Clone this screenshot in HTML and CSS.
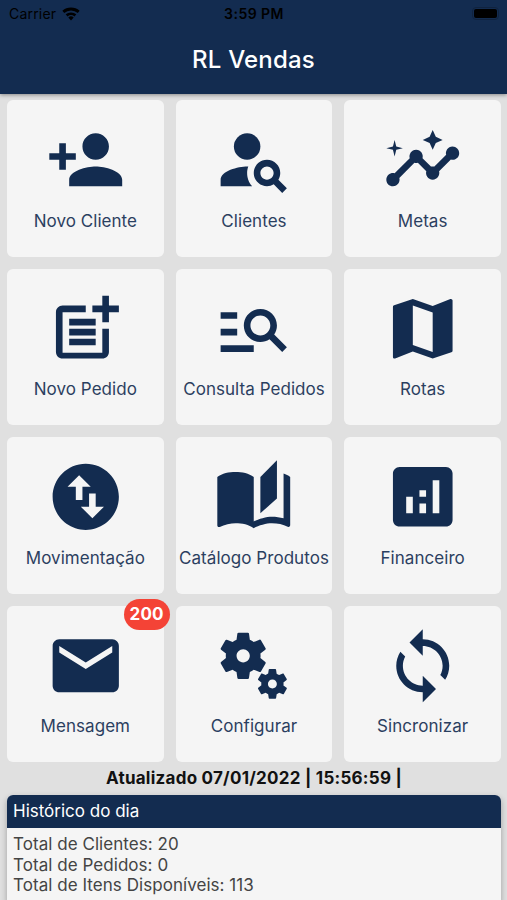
FILE: index.html
```html
<!DOCTYPE html>
<html lang="pt-BR">
<head>
    <meta charset="UTF-8">
    <meta name="viewport" content="width=device-width, initial-scale=1.0">
    <title>RL Vendas</title>
    <link rel="stylesheet" href="styles.css">
</head>
<body>

    <header class="app-bar">
        <div class="status-bar">
            <div class="carrier">
                <span>Carrier</span>
                <svg class="wifi" viewBox="0 0 18 14">
                    <path d="M9 13.6l2.7-3.2a4.2 4.2 0 0 0-5.4 0z" />
                    <path d="M4.6 8.4a6.8 6.8 0 0 1 8.8 0M1.3 4.9a11.6 11.6 0 0 1 15.4 0" fill="none" stroke="currentColor" stroke-width="2.8" />
                </svg>
            </div>
            <div class="clock">3:59 PM</div>
            <div class="battery"><div class="battery-level"></div></div>
        </div>
        <h1>RL Vendas</h1>
    </header>

    <main>
        <div class="menu">
            <a class="card" href="#">
                <svg class="icon" viewBox="0 0 24 24"><path d="M15 12c2.21 0 4-1.79 4-4s-1.79-4-4-4-4 1.79-4 4 1.79 4 4 4zm-9-2V7H4v3H1v2h3v3h2v-3h3v-2H6zm9 4c-2.67 0-8 1.34-8 4v2h16v-2c0-2.66-5.33-4-8-4z" /></svg>
                <span>Novo Cliente</span>
            </a>
            <a class="card" href="#">
                <svg class="icon" viewBox="0 0 24 24"><circle cx="10" cy="8" r="4" /><path d="M10.35 14.01C7.62 13.91 2 15.27 2 18v2h9.54c-2.47-2.76-1.23-5.89-1.19-5.99zM19.43 18.02C19.79 17.43 20 16.74 20 16c0-2.21-1.79-4-4-4s-4 1.79-4 4 1.79 4 4 4c.74 0 1.43-.22 2.02-.57L20.59 22 22 20.59l-2.57-2.57zM16 18c-1.1 0-2-.9-2-2s.9-2 2-2 2 .9 2 2-.9 2-2 2z" /></svg>
                <span>Clientes</span>
            </a>
            <a class="card" href="#">
                <svg class="icon" viewBox="0 0 24 24"><path d="M21 8c-1.45 0-2.26 1.44-1.93 2.51l-3.55 3.56c-.3-.09-.74-.09-1.04 0l-2.55-2.55C12.27 10.45 11.46 9 10 9c-1.45 0-2.27 1.44-1.93 2.52l-4.56 4.55C2.44 15.74 1 16.55 1 18c0 1.1.9 2 2 2 1.45 0 2.26-1.44 1.93-2.51l4.55-4.56c.3.09.74.09 1.04 0l2.55 2.55C12.73 16.55 13.54 18 15 18c1.45 0 2.27-1.44 1.93-2.52l3.56-3.55C21.56 12.26 23 11.45 23 10c0-1.1-.9-2-2-2z" /><path d="M15 9l.94-2.07L18 6l-2.06-.93L15 3l-.92 2.07L12 6l2.08.93zM3.5 11L4 9l2-.5L4 8l-.5-2L3 8l-2 .5L3 9z" /></svg>
                <span>Metas</span>
            </a>
            <a class="card" href="#">
                <svg class="icon" viewBox="0 0 24 24"><path d="M17 19.22H5V7h7V5H5c-1.1 0-2 .9-2 2v12c0 1.1.9 2 2 2h12c1.1 0 2-.9 2-2v-7h-2v7.22z" /><path d="M19 2h-2v3h-3v2h3v3h2V7h3V5h-3V2zM7 9h8v2H7zM7 12h8v2H7zM7 15h8v2H7z" /></svg>
                <span>Novo Pedido</span>
            </a>
            <a class="card" href="#">
                <svg class="icon" viewBox="0 0 24 24"><path d="M7 9H2V7h5v2zm0 3H2v2h5v-2zm13.59 7l-3.83-3.83c-.8.52-1.74.83-2.76.83-2.76 0-5-2.24-5-5s2.24-5 5-5 5 2.24 5 5c0 1.02-.31 1.96-.83 2.75L22 17.59 20.59 19zM17 11c0-1.65-1.35-3-3-3s-3 1.35-3 3 1.35 3 3 3 3-1.35 3-3zM2 19h10v-2H2v2z" /></svg>
                <span>Consulta Pedidos</span>
            </a>
            <a class="card" href="#">
                <svg class="icon" viewBox="0 0 24 24"><path d="M20.5 3l-.16.03L15 5.1 9 3 3.36 4.9c-.21.07-.36.25-.36.48V20.5c0 .28.22.5.5.5l.16-.03L9 18.9l6 2.1 5.64-1.9c.21-.07.36-.25.36-.48V3.5c0-.28-.22-.5-.5-.5zM15 19l-6-2.11V5l6 2.11V19z" /></svg>
                <span>Rotas</span>
            </a>
            <a class="card" href="#">
                <svg class="icon" viewBox="0 0 24 24"><path d="M12 2C6.48 2 2 6.48 2 12s4.48 10 10 10 10-4.48 10-10S17.52 2 12 2zM6.5 9L10 5.5 13.5 9H11v4H9V9H6.5zm11 6L14 18.5 10.5 15H13v-4h2v4h2.5z" /></svg>
                <span>Movimentação</span>
            </a>
            <a class="card" href="#">
                <svg class="icon" viewBox="0 0 24 24"><path d="M19 1l-5 5v11l5-4.5V1z" /><path d="M1 6v14.65c0 .25.25.5.5.5.1 0 .15-.05.25-.05C3.1 20.45 5.05 20 6.5 20c1.95 0 4.05.4 5.5 1.5V6c-1.45-1.1-3.55-1.5-5.5-1.5S2.45 4.9 1 6zm22 13.5V6c-.6-.45-1.25-.75-2-1v13.5c-1.1-.35-2.3-.5-3.5-.5-1.7 0-4.15.65-5.5 1.5v2c1.35-.85 3.8-1.5 5.5-1.5 1.65 0 3.35.3 4.75 1.05.1.05.15.05.25.05.25 0 .5-.25.5-.5v-1.1z" /></svg>
                <span>Catálogo Produtos</span>
            </a>
            <a class="card" href="#">
                <svg class="icon" viewBox="0 0 24 24"><path d="M19 3H5c-1.1 0-2 .9-2 2v14c0 1.1.9 2 2 2h14c1.1 0 2-.9 2-2V5c0-1.1-.9-2-2-2zM9 17H7v-5h2v5zm4 0h-2v-3h2v3zm0-5h-2v-2h2v2zm4 5h-2V7h2v10z" /></svg>
                <span>Financeiro</span>
            </a>
            <a class="card" href="#">
                <svg class="icon" viewBox="0 0 24 24"><path d="M20 4H4c-1.1 0-1.99.9-1.99 2L2 18c0 1.1.9 2 2 2h16c1.1 0 2-.9 2-2V6c0-1.1-.9-2-2-2zm0 4l-8 5-8-5V6l8 5 8-5v2z" /></svg>
                <span>Mensagem</span>
                <div class="badge">200</div>
            </a>
            <a class="card" href="#">
                <svg class="icon" viewBox="0 0 24 24"><path d="M14.17 13.71l1.4-2.42c.09-.15.05-.34-.08-.45l-1.48-1.16c.03-.22.05-.45.05-.68s-.02-.46-.05-.69l1.48-1.16c.13-.11.17-.3.08-.45l-1.4-2.42c-.09-.15-.27-.21-.43-.15L12 4.83c-.36-.28-.75-.51-1.18-.69l-.26-1.86C10.53 2.12 10.38 2 10.21 2h-2.8c-.17 0-.32.12-.35.3L6.8 4.15c-.42.18-.82.41-1.18.69l-1.74-.7c-.16-.06-.34 0-.43.15l-1.4 2.42c-.09.15-.05.34.08.45l1.48 1.16C3.58 8.54 3.56 8.77 3.56 9s.02.46.05.69l-1.48 1.16c-.13.11-.17.3-.08.45l1.4 2.42c.09.15.27.21.43.15l1.74-.7c.36.28.75.51 1.18.69l.26 1.86c.03.16.18.28.35.28h2.8c.17 0 .32-.12.35-.28l.26-1.86c.42-.18.82-.41 1.18-.69l1.74.7c.16.06.34 0 .43-.15zM8.81 11c-1.1 0-2-.9-2-2s.9-2 2-2 2 .9 2 2-.9 2-2 2z" /><path d="M21.92 18.67l-.96-.74c.02-.14.04-.29.04-.44 0-.15-.01-.3-.04-.44l.95-.74c.08-.07.11-.19.05-.29l-.9-1.55c-.05-.1-.17-.13-.28-.1l-1.11.45c-.23-.18-.48-.33-.76-.44l-.17-1.18c-.01-.12-.11-.2-.21-.2h-1.79c-.11 0-.21.08-.22.19l-.17 1.18c-.27.12-.53.26-.76.44l-1.11-.45c-.1-.04-.22 0-.28.1l-.9 1.55c-.05.1-.04.22.05.29l.95.74c-.02.14-.03.29-.03.44 0 .15.01.3.03.44l-.95.74c-.08.07-.11.19-.05.29l.9 1.55c.05.1.17.13.28.1l1.11-.45c.23.18.48.33.76.44l.17 1.18c.02.11.11.19.22.19h1.79c.11 0 .21-.08.22-.19l.17-1.18c.27-.12.53-.26.75-.44l1.12.45c.1.04.22 0 .28-.1l.9-1.55c.06-.09.03-.21-.05-.28zm-4.29.17c-.74 0-1.35-.6-1.35-1.35s.6-1.35 1.35-1.35 1.35.6 1.35 1.35-.61 1.35-1.35 1.35z" /></svg>
                <span>Configurar</span>
            </a>
            <a class="card" href="#">
                <svg class="icon" viewBox="0 0 24 24"><path d="M12 4V1L8 5l4 4V6c3.31 0 6 2.69 6 6 0 1.01-.25 1.97-.7 2.8l1.46 1.46C19.54 15.03 20 13.57 20 12c0-4.42-3.58-8-8-8zm0 14c-3.31 0-6-2.69-6-6 0-1.01.25-1.97.7-2.8L5.24 7.74C4.46 8.97 4 10.43 4 12c0 4.42 3.58 8 8 8v3l4-4-4-4v3z" /></svg>
                <span>Sincronizar</span>
            </a>
        </div>

        <p class="updated">Atualizado 07/01/2022 | 15:56:59 |</p>

        <section class="history">
            <h2>Histórico do dia</h2>
            <ul>
                <li>Total de Clientes: 20</li>
                <li>Total de Pedidos: 0</li>
                <li>Total de Itens Disponíveis: 113</li>
            </ul>
        </section>
    </main>

</body>
</html>
```
FILE: styles.css
```css
* {
    box-sizing: border-box;
}

body {
    margin: 0;
    height: 100vh;
    display: flex;
    flex-direction: column;
    overflow: hidden;
    background-color: #e0e0e0;
    font-family: Inter, "Liberation Sans", sans-serif;
}

.app-bar {
    position: relative;
    flex: none;
    height: 94px;
    background-color: #132c50;
    box-shadow: 0 1px 4px rgba(0, 0, 0, 0.4);
}

.status-bar {
    display: grid;
    grid-template-columns: 1fr auto 1fr;
    align-items: center;
    height: 27px;
    padding: 0 8px 0 9px;
    color: #000;
    font-size: 14px;
}

.carrier {
    display: flex;
    align-items: center;
    gap: 6px;
    letter-spacing: 0.2px;
}

.wifi {
    width: 18px;
    height: 14px;
    fill: currentColor;
}

.clock {
    font-weight: 600;
    letter-spacing: 0.45px;
}

.battery {
    justify-self: end;
    width: 27px;
    height: 13px;
    padding: 1px;
    border: 1px solid #10233f;
    border-radius: 4px;
}

.battery-level {
    height: 100%;
    border-radius: 2px;
    background-color: #000;
}

h1 {
    margin: 0;
    color: #fff;
    font-size: 24px;
    font-weight: 500;
    line-height: 66px;
    letter-spacing: 0.2px;
    text-align: center;
}

main {
    flex: 1;
    min-height: 0;
    display: flex;
    flex-direction: column;
    padding: 6px 6px 0 7px;
}

.menu {
    display: grid;
    grid-template-columns: repeat(3, 1fr);
    grid-auto-rows: 156.5px;
    gap: 12px;
}

.card {
    position: relative;
    display: flex;
    flex-direction: column;
    align-items: center;
    padding-top: 20px;
    border-radius: 6px;
    background-color: #f5f5f5;
    color: #132c50;
    font-size: 17px;
    line-height: 22px;
    letter-spacing: 0.05px;
    text-decoration: none;
    white-space: nowrap;
}

    .card span {
        margin-top: 10px;
        opacity: 0.9;
    }

.icon {
    width: 79.5px;
    height: 79.5px;
    fill: #132c50;
}

.badge {
    position: absolute;
    top: -7px;
    right: -6px;
    width: 46px;
    height: 31px;
    border-radius: 16px;
    background-color: #f44336;
    color: #fff;
    font-weight: 700;
    line-height: 31px;
    letter-spacing: 0.2px;
    text-align: center;
}

.updated {
    margin: 5px 0 6px;
    color: #111;
    font-size: 17px;
    font-weight: 700;
    line-height: 22px;
    letter-spacing: 0.25px;
    text-align: center;
}

.history {
    flex: 1;
    border-radius: 6px 6px 0 0;
    background-color: #f5f5f5;
    box-shadow: 0 3px 6px rgba(0, 0, 0, 0.3);
}

    .history h2 {
        margin: 0;
        padding-left: 6px;
        border-radius: 6px 6px 0 0;
        background-color: #132c50;
        color: #fff;
        font-size: 17px;
        font-weight: 400;
        line-height: 33px;
    }

    .history ul {
        margin: 0;
        padding: 6px;
        list-style: none;
        color: #444;
        font-size: 17px;
        line-height: 20.7px;
        letter-spacing: 0.05px;
    }
```
